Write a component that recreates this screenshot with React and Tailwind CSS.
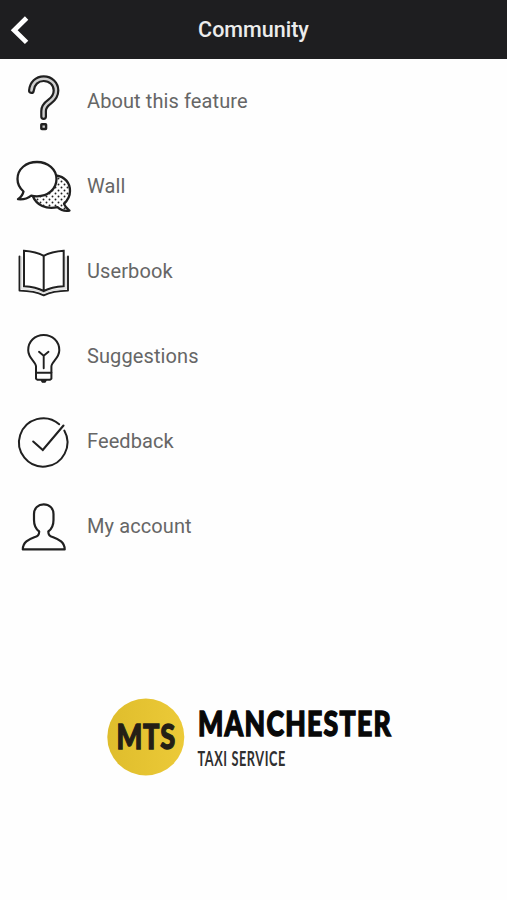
import React from "react";

function RowIcon({ top, children }) {
  return (
    <svg
      className="h-[85px] w-[60px] shrink-0"
      viewBox={`14 ${top} 60 85`}
      fill="none"
      stroke="#202020"
      strokeWidth="2"
      strokeLinejoin="round"
      strokeLinecap="round"
      aria-hidden="true"
    >
      {children}
    </svg>
  );
}

const questionPath =
  "M31.4 90.6C32 83.5 37 78.7 43.7 78.7C50.8 78.7 56 84.1 56 90.5C56 95.4 53.3 98.9 49.8 101.5C45.8 104.4 43.6 106.5 43.6 111V116.5";

function QuestionIcon() {
  return (
    <RowIcon top={59}>
      <path d={questionPath} strokeWidth="6.8" />
      <path d={questionPath} stroke="#cfcfcf" strokeWidth="2.4" />
      <rect x="41.3" y="124.2" width="4.8" height="4.8" rx="0.6" fill="#ccc" strokeWidth="2.4" />
    </RowIcon>
  );
}

function WallIcon() {
  return (
    <RowIcon top={144}>
      <defs>
        <pattern id="dots" width="6" height="6" patternUnits="userSpaceOnUse">
          <circle cx="1.5" cy="1.5" r="0.95" fill="#222" stroke="none" />
          <circle cx="4.5" cy="4.5" r="0.95" fill="#222" stroke="none" />
        </pattern>
      </defs>
      <path
        d="M56 175.5C65 176.5 70 183 70 191C70 197 67.5 200.5 64 203.8C65.2 207 67.5 208.8 69.5 210.6C65 211.4 60.5 210 57.5 207.2C46 209.8 36.5 205 33 196.5Z"
        fill="url(#dots)"
        strokeWidth="2.3"
      />
      <path
        d="M23.5 191.5C19.5 188 17.5 184 17.5 179C17.5 169 26 162 37 162C48 162 56.5 169.5 56.5 179C56.5 189 48 196.3 37 196.3C34.8 196.3 33 196.1 31.2 195.6C27.3 198.7 23 199.8 18 199.2C21 197.2 22.8 195 23.5 191.5Z"
        fill="#fff"
        strokeWidth="2.3"
      />
    </RowIcon>
  );
}

function BookIcon() {
  return (
    <RowIcon top={229}>
      <path
        d="M19.5 256.5V290.6C29 290.8 37 292 43.7 295.3C50.5 292 58.5 290.8 68 290.6V256.5"
        strokeWidth="1.9"
      />
      <path
        d="M21.5 257V288.7C31 289 38 290.2 43.7 293.1C49.5 290.2 56.5 289 66 288.7V257"
        stroke="#dedede"
        strokeWidth="1.6"
      />
      <path
        d="M43.7 255.8C38 252.5 31.7 251.2 24 250.7V286.2C32 286.7 38 288 43.7 291C49.5 288 55.5 286.7 63.7 286.2V250.7C56 251.2 49.5 252.5 43.7 255.8V290"
        fill="#fff"
        strokeWidth="2"
        strokeLinejoin="miter"
      />
    </RowIcon>
  );
}

function BulbIcon() {
  return (
    <RowIcon top={314}>
      <path d="M36 372.5V366.5C36 361.7 28.2 358.5 28.2 350.2C28.2 341.4 35 335 43.7 335C52.5 335 59.3 341.4 59.3 350.2C59.3 358.5 51.4 361.7 51.4 366.5V372.5" />
      <path d="M36 372.7H51.4V378.6L50 379.7H37.4L36 378.6Z" />
      <path d="M43.7 368.2V355.8M39 351.8L43.7 355.8L48.5 351.8" strokeWidth="1.9" />
      <path d="M41.3 380.5H46.1L45 382.2H42.4Z" fill="#202020" strokeWidth="1.3" />
    </RowIcon>
  );
}

function CheckIcon() {
  return (
    <RowIcon top={399}>
      <path d="M59.2 424.3A24.2 24.2 0 1 0 64.3 430.6" />
      <path d="M33.2 441.5L42.8 450L63.5 425.5" strokeLinejoin="miter" strokeWidth="2.1" />
    </RowIcon>
  );
}

function PersonIcon() {
  return (
    <RowIcon top={484}>
      <path
        d="M22.8 549.4H64.7C64.7 541.8 58.8 539.5 53.2 537.3C49.5 535.9 48.3 534.9 48.3 531.5C51.8 529 53.5 525 53.5 520V514C53.5 508.2 49.3 504.4 43.7 504.4C38.2 504.4 34 508.2 34 514V520C34 525 35.7 529 39.2 531.5C39.2 534.9 38 535.9 34.3 537.3C28.7 539.5 22.8 541.8 22.8 549.4Z"
        strokeWidth="2.2"
      />
    </RowIcon>
  );
}

const items = [
  { label: "About this feature", Icon: QuestionIcon },
  { label: "Wall", Icon: WallIcon },
  { label: "Userbook", Icon: BookIcon },
  { label: "Suggestions", Icon: BulbIcon },
  { label: "Feedback", Icon: CheckIcon },
  { label: "My account", Icon: PersonIcon },
];

function Logo() {
  return (
    <svg
      className="h-[90px] w-[507px]"
      viewBox="0 692 507 90"
      fontFamily="Lato, sans-serif"
      role="img"
      aria-label="Manchester Taxi Service"
    >
      <defs>
        <linearGradient id="gold">
          <stop offset="0" stopColor="#dfbd2c" />
          <stop offset="1" stopColor="#ecca38" />
        </linearGradient>
      </defs>
      <circle cx="145.8" cy="737" r="38.5" fill="url(#gold)" />
      <text x="116.5" y="749.2" fontSize="34" fontWeight="900" fill="#241f16" stroke="#241f16" strokeWidth="1.3" letterSpacing="1" textLength="59.5" lengthAdjust="spacingAndGlyphs">
        MTS
      </text>
      <text x="198" y="735.7" fontSize="34" fontWeight="900" fill="#080808" stroke="#080808" strokeWidth="1.4" letterSpacing="1.6" textLength="194" lengthAdjust="spacingAndGlyphs">
        MANCHESTER
      </text>
      <text x="197.5" y="766" fontSize="21" fontWeight="700" fill="#303030" letterSpacing="1" textLength="88.5" lengthAdjust="spacingAndGlyphs">
        TAXI SERVICE
      </text>
    </svg>
  );
}

export default function App() {
  return (
    <div className="flex h-[900px] w-[507px] flex-col overflow-hidden bg-[#fefefe] font-[Roboto,sans-serif]">
      <header className="grid h-[59px] shrink-0 grid-cols-[60px_1fr_60px] items-center bg-[#1e1e20]">
        <button aria-label="Back" className="h-[59px] w-[60px]">
          <svg className="h-[59px] w-[60px]" viewBox="0 0 60 59" fill="none" stroke="#fff" strokeWidth="4.8">
            <path d="M26.6 18L14.2 30.2L26.6 42.4" />
          </svg>
        </button>
        <h1 className="text-center text-[21.5px] font-medium leading-[59px] text-[#ececec]">
          Community
        </h1>
      </header>
      <nav className="flex flex-col pl-[14px]">
        {items.map(({ label, Icon }) => (
          <a key={label} className="flex h-[85px] items-center gap-[13px]">
            <Icon />
            <span className="whitespace-nowrap pb-px text-[20px] leading-6 tracking-[0.1px] text-[#666]">{label}</span>
          </a>
        ))}
      </nav>
      <footer className="mt-[123px]">
        <Logo />
      </footer>
    </div>
  );
}
